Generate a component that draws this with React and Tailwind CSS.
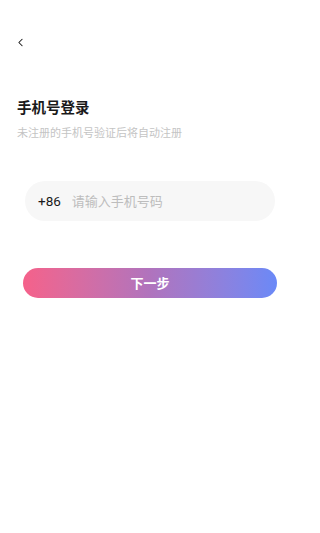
import { ChevronLeft } from "lucide-react";

export default function App() {
    return (
        <div className="w-[300px] h-[533px] bg-white font-['Noto_Sans_CJK_SC',sans-serif]">
            {/* Back */}
            <div className="pt-[36px] pl-[14px] h-[58px]">
                <ChevronLeft className="w-[13px] h-[13px] text-[#111]" strokeWidth={1.9} />
            </div>

            {/* Title */}
            <div className="px-[17px] pt-[39px]">
                <h1 className="text-[14.5px] leading-[20px] font-bold text-[#1a1a1a]">手机号登录</h1>
                <p className="mt-[8px] text-[11px] leading-[14px] text-[#c4c4c4]">未注册的手机号验证后将自动注册</p>
            </div>

            {/* Phone input */}
            <div className="mx-[25px] mt-[42px] h-[40px] rounded-full bg-[#f7f7f7] flex items-center pl-[13px]">
                <span className="text-[13.5px] text-[#1a1a1a] font-['Roboto','Noto_Sans_CJK_SC',sans-serif]">+86</span>
                <input
                    className="ml-[11px] flex-1 min-w-0 bg-transparent outline-none text-[13px] text-[#333] placeholder:text-[#bdbdbd]"
                    placeholder="请输入手机号码"
                />
            </div>

            {/* Next */}
            <button className="mx-[23px] mt-[47px] w-[254px] h-[30px] rounded-full bg-gradient-to-r from-[#f5618a] via-[#b073bd] to-[#6a89f7] text-white text-[13px] font-bold">
                下一步
            </button>
        </div>
    );
}
